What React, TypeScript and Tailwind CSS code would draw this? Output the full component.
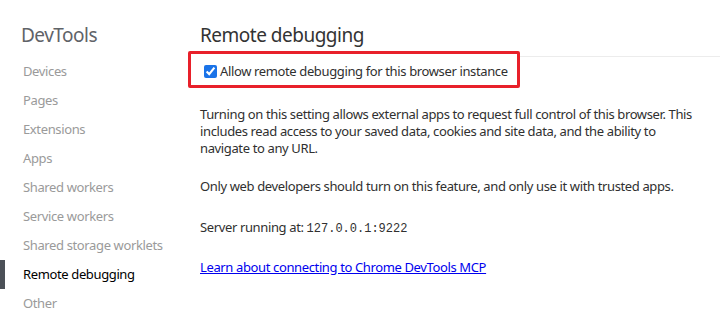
const navItems = [
  "Devices",
  "Pages",
  "Extensions",
  "Apps",
  "Shared workers",
  "Service workers",
  "Shared storage worklets",
  "Remote debugging",
  "Other",
];

export default function App() {
  const active = "Remote debugging";

  return (
    <div className="flex h-[327px] w-[720px] overflow-hidden bg-white font-['Noto_Sans',sans-serif] text-[13px] tracking-[-0.37px] text-[#303030]">
      {/* Sidebar */}
      <div className="w-[200px] shrink-0 pt-[19px]">
        <h1 className="pl-[21px] text-[19px] leading-[32px] font-normal tracking-[-0.5px] text-[#5f6368]">DevTools</h1>
        <ul className="mt-[6px]">
          {navItems.map((item) => (
            <li key={item} className="flex h-[29px] items-center">
              <div className={`h-full w-[5px] ${item === active ? "bg-[#4b5057]" : ""}`} />
              <span className={`pl-[18px] ${item === active ? "text-black" : "text-[#9a9a9a]"}`}>{item}</span>
            </li>
          ))}
        </ul>
      </div>

      {/* Main content */}
      <div className="flex-1 pt-[19px]">
        <h2 className="text-[19px] leading-[32px] font-normal tracking-[-0.5px] text-[#333]">Remote debugging</h2>
        <div className="relative">
          <div className="absolute top-[5px] right-0 left-0 h-px bg-[#ececec]" />
          <label className="relative -ml-[12px] flex h-[37px] w-[332px] items-center gap-[3px] rounded-[2px] border-[3px] border-[#e8202a] bg-white pt-[4px] pl-[13px]">
            <input type="checkbox" defaultChecked className="h-[13px] w-[13px] accent-[#1a73e8]" />
            <span className="leading-[17px]">Allow remote debugging for this browser instance</span>
          </label>
        </div>
        <div className="mt-[18px] w-[508px] leading-[17px]">
          <p>
            Turning on this setting allows external apps to request full control of this browser. This includes read access to your saved data, cookies and site data, and the ability to navigate to any URL.
          </p>
          <p className="mt-[21px]">Only web developers should turn on this feature, and only use it with trusted apps.</p>
          <p className="mt-[24px]">
            Server running at: <span className="font-['Liberation_Mono',monospace] text-[12px] tracking-normal">127.0.0.1:9222</span>
          </p>
          <p className="mt-[21px]">
            <a href="#" className="text-[#0000ee] underline">Learn about connecting to Chrome DevTools MCP</a>
          </p>
        </div>
      </div>
    </div>
  );
}
